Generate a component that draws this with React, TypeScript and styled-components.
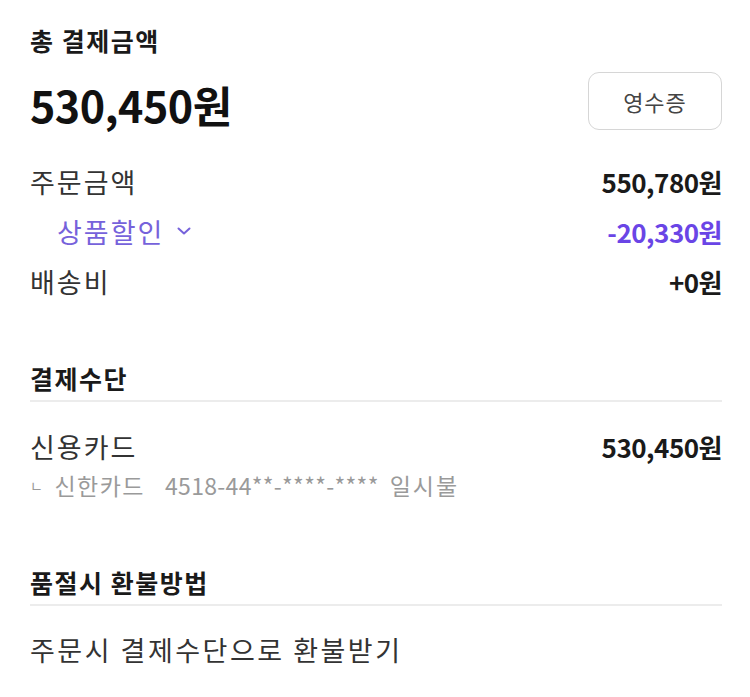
import React from 'react';
import styled, { createGlobalStyle } from 'styled-components';

const GlobalStyle = createGlobalStyle`
  html, body {
    margin: 0;
    padding: 0;
    background: #ffffff;
  }
  body {
    font-family: "Noto Sans CJK KR", "Noto Sans", sans-serif;
    color: #333333;
    -webkit-font-smoothing: antialiased;
  }
`;

const Page = styled.div`
  width: 750px;
  box-sizing: border-box;
  padding: 24px 28px 20px 30px;
`;

const Title = styled.h2`
  margin: 0;
  font-size: 25px;
  line-height: 32px;
  font-weight: 700;
  letter-spacing: 1.5px;
  color: #1a1a1a;
`;

const TotalRow = styled.div`
  display: flex;
  align-items: flex-start;
  justify-content: space-between;
  margin-top: 16px;
`;

const TotalAmount = styled.div`
  font-size: 43px;
  line-height: 58px;
  font-weight: 700;
  color: #111111;
  letter-spacing: -0.5px;
  padding-top: 3px;
`;

const ReceiptButton = styled.button`
  width: 134px;
  height: 58px;
  border: 1.5px solid #d6d6d6;
  border-radius: 11px;
  background: #ffffff;
  font-family: inherit;
  font-size: 22px;
  letter-spacing: 1px;
  color: #444444;
  cursor: pointer;
`;

const Rows = styled.div`
  margin-top: 23px;
  display: flex;
  flex-direction: column;
`;

const Row = styled.div<{ $indent?: boolean }>`
  display: flex;
  align-items: center;
  justify-content: space-between;
  height: 50px;
  padding-left: ${(p) => (p.$indent ? '27px' : '0')};
`;

const Label = styled.span<{ $accent?: boolean }>`
  display: inline-flex;
  align-items: center;
  gap: 12px;
  font-size: 27px;
  letter-spacing: 2px;
  color: ${(p) => (p.$accent ? '#7662db' : '#333333')};
`;

const Value = styled.span<{ $accent?: boolean }>`
  font-size: 26px;
  font-weight: 700;
  letter-spacing: -0.5px;
  color: ${(p) => (p.$accent ? '#6a45e6' : '#1a1a1a')};
`;

const Section = styled.section<{ $gap: number }>`
  margin-top: ${(p) => p.$gap}px;
`;

const SectionTitle = styled.h3`
  margin: 0;
  font-size: 25px;
  line-height: 32px;
  font-weight: 700;
  letter-spacing: 1.5px;
  color: #1a1a1a;
  padding-bottom: 6px;
  border-bottom: 2px solid #ececec;
`;

const SectionBody = styled.div`
  padding-top: 24px;
`;

const PayRow = styled.div`
  display: flex;
  align-items: center;
  justify-content: space-between;
  height: 40px;
`;

const CardDetail = styled.div`
  margin-top: 3px;
  font-size: 23px;
  line-height: 32px;
  letter-spacing: 0.3px;
  color: #9a9a9a;
  display: flex;
  align-items: center;
`;

const CardName = styled.span`
  display: inline-flex;
  align-items: center;
  gap: 10px;
  letter-spacing: 1.5px;
  margin-right: 20px;
`;

const Corner = styled.span`
  font-size: 14px;
  line-height: 14px;
`;

const Installment = styled.span`
  margin-left: 11px;
  letter-spacing: 2px;
`;

const PlainText = styled.div`
  font-size: 27px;
  line-height: 40px;
  letter-spacing: 2.5px;
  color: #333333;
`;

const Chevron = () => (
  <svg width="16" height="16" viewBox="0 0 16 16" fill="none">
    <path d="M2.5 5.5 L8 10.5 L13.5 5.5" stroke="#7662db" strokeWidth="2" strokeLinecap="round" strokeLinejoin="round" />
  </svg>
);

export default function App() {
  return (
    <>
      <GlobalStyle />
      <Page>
        <Title>총 결제금액</Title>
        <TotalRow>
          <TotalAmount>530,450원</TotalAmount>
          <ReceiptButton>영수증</ReceiptButton>
        </TotalRow>

        <Rows>
          <Row>
            <Label>주문금액</Label>
            <Value>550,780원</Value>
          </Row>
          <Row $indent>
            <Label $accent>
              상품할인
              <Chevron />
            </Label>
            <Value $accent>-20,330원</Value>
          </Row>
          <Row>
            <Label>배송비</Label>
            <Value>+0원</Value>
          </Row>
        </Rows>

        <Section $gap={56}>
          <SectionTitle>결제수단</SectionTitle>
          <SectionBody>
            <PayRow>
              <Label>신용카드</Label>
              <Value>530,450원</Value>
            </PayRow>
            <CardDetail>
              <CardName>
                <Corner>ㄴ</Corner>
                신한카드
              </CardName>
              <span>4518-44**-****-****</span>
              <Installment>일시불</Installment>
            </CardDetail>
          </SectionBody>
        </Section>

        <Section $gap={65}>
          <SectionTitle>품절시 환불방법</SectionTitle>
          <SectionBody>
            <PlainText>주문시 결제수단으로 환불받기</PlainText>
          </SectionBody>
        </Section>
      </Page>
    </>
  );
}
